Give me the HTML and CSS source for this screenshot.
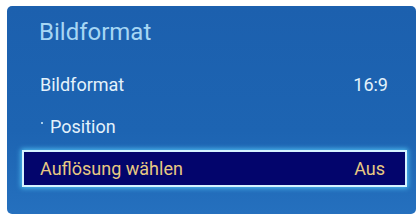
FILE: index.html
```html
<!DOCTYPE html>
<html lang="de">
<head>
  <meta charset="UTF-8">
  <title>Bildformat</title>
  <link rel="stylesheet" href="styles.css">
</head>
<body>
  <div class="panel">
    <div class="title">Bildformat</div>

    <div class="menu">
      <div class="row">
        <span class="label">Bildformat</span>
        <span class="value">16:9</span>
      </div>
      <div class="row">
        <span class="label"><span class="dot"></span>Position</span>
      </div>
      <div class="row selected">
        <span class="label">Auflösung wählen</span>
        <span class="value">Aus</span>
      </div>
    </div>
  </div>
</body>
</html>
```

FILE: styles.css
```css
* {
  margin: 0;
  padding: 0;
  box-sizing: border-box;
}

body {
  width: 420px;
  height: 217px;
  background: white;
  font-family: Roboto, 'DejaVu Sans', sans-serif;
  overflow: hidden;
}

.panel {
  margin: 6px 4px 0 7px;
  height: 208px;
  border-radius: 5px;
  background: linear-gradient(180deg, #1c60ae 0%, #1d64b2 60%, #2570be 100%);
  padding-top: 10px;
}

.title {
  font-size: 24px;
  line-height: 32px;
  color: #a6d6f4;
  padding-left: 32px;
  height: 47px;
}

.menu {
  display: flex;
  flex-direction: column;
}

.row {
  display: flex;
  justify-content: space-between;
  align-items: center;
  height: 42px;
  margin: 0 9px 0 15px;
  padding: 0 19px 0 18px;
  font-size: 18px;
  color: #e4f2fb;
}

.label {
  display: flex;
  align-items: center;
}

.dot {
  width: 2px;
  height: 2px;
  background: #c8e6f8;
  margin: 0 7px 6px 1px;
  opacity: 0.8;
}

.selected {
  height: 37px;
  margin-top: 3px;
  padding: 0 20px 0 16px;
  background: #03056c;
  border: 2px solid #d6f3ff;
  box-shadow: 0 0 5px 1px rgba(90, 210, 255, 0.85);
  color: #e8c982;
}
```
